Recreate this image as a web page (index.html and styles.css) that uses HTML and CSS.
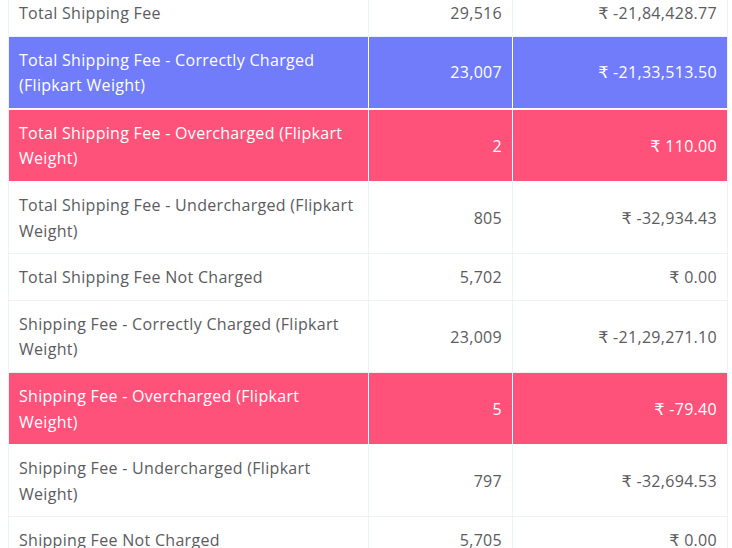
FILE: index.html
```html
<!DOCTYPE html>
<html>
<head>
<meta charset="utf-8">
<link rel="stylesheet" href="styles.css">
</head>
<body>
<table class="fees">
  <colgroup><col class="c1"><col class="c2"><col class="c3"></colgroup>
  <tbody>
    <tr><td>Total Shipping Fee</td><td class="num">29,516</td><td class="num">₹ -21,84,428.77</td></tr>
    <tr class="blue"><td>Total Shipping Fee - Correctly Charged (Flipkart Weight)</td><td class="num">23,007</td><td class="num">₹ -21,33,513.50</td></tr>
    <tr class="pink"><td>Total Shipping Fee - Overcharged (Flipkart Weight)</td><td class="num">2</td><td class="num">₹ 110.00</td></tr>
    <tr><td>Total Shipping Fee - Undercharged (Flipkart Weight)</td><td class="num">805</td><td class="num">₹ -32,934.43</td></tr>
    <tr><td>Total Shipping Fee Not Charged</td><td class="num">5,702</td><td class="num">₹ 0.00</td></tr>
    <tr><td>Shipping Fee - Correctly Charged (Flipkart Weight)</td><td class="num">23,009</td><td class="num">₹ -21,29,271.10</td></tr>
    <tr class="pink"><td>Shipping Fee - Overcharged (Flipkart Weight)</td><td class="num">5</td><td class="num">₹ -79.40</td></tr>
    <tr><td>Shipping Fee - Undercharged (Flipkart Weight)</td><td class="num">797</td><td class="num">₹ -32,694.53</td></tr>
    <tr><td>Shipping Fee Not Charged</td><td class="num">5,705</td><td class="num">₹ 0.00</td></tr>
  </tbody>
</table>
</body>
</html>
```
FILE: styles.css
```css
html, body {
  margin: 0;
  background: #ffffff;
}
body {
  padding: 0 6px 0 8px;
  font-family: "Open Sans", "DejaVu Sans", sans-serif;
  font-size: 16px;
  letter-spacing: 0.3px;
  color: #5b5b60;
}
.fees {
  width: 718px;
  margin-top: -10px;
  border-collapse: separate;
  border-spacing: 0;
  table-layout: fixed;
  border-left: 1px solid #eef1f5;
  border-right: 1px solid #eef1f5;
}
.c1 { width: 359px; }
.c2 { width: 144px; }
.c3 { width: 215px; }
.fees td {
  padding: 11px 10px 9px;
  line-height: 25.6px;
  border-bottom: 1px solid #eef1f5;
  vertical-align: middle;
}
.fees td + td {
  border-left: 1px solid #eef1f5;
}
.fees .num {
  text-align: right;
}
.fees tr.blue td {
  background: #707cf9;
  color: #ffffff;
  border-color: #ffffff;
}
.fees tr.pink td {
  background: #fe527a;
  color: #ffffff;
  border-color: #ffffff;
}
.fees tr.blue + tr.pink td {
  border-top: 1px solid #ffffff;
}
```
